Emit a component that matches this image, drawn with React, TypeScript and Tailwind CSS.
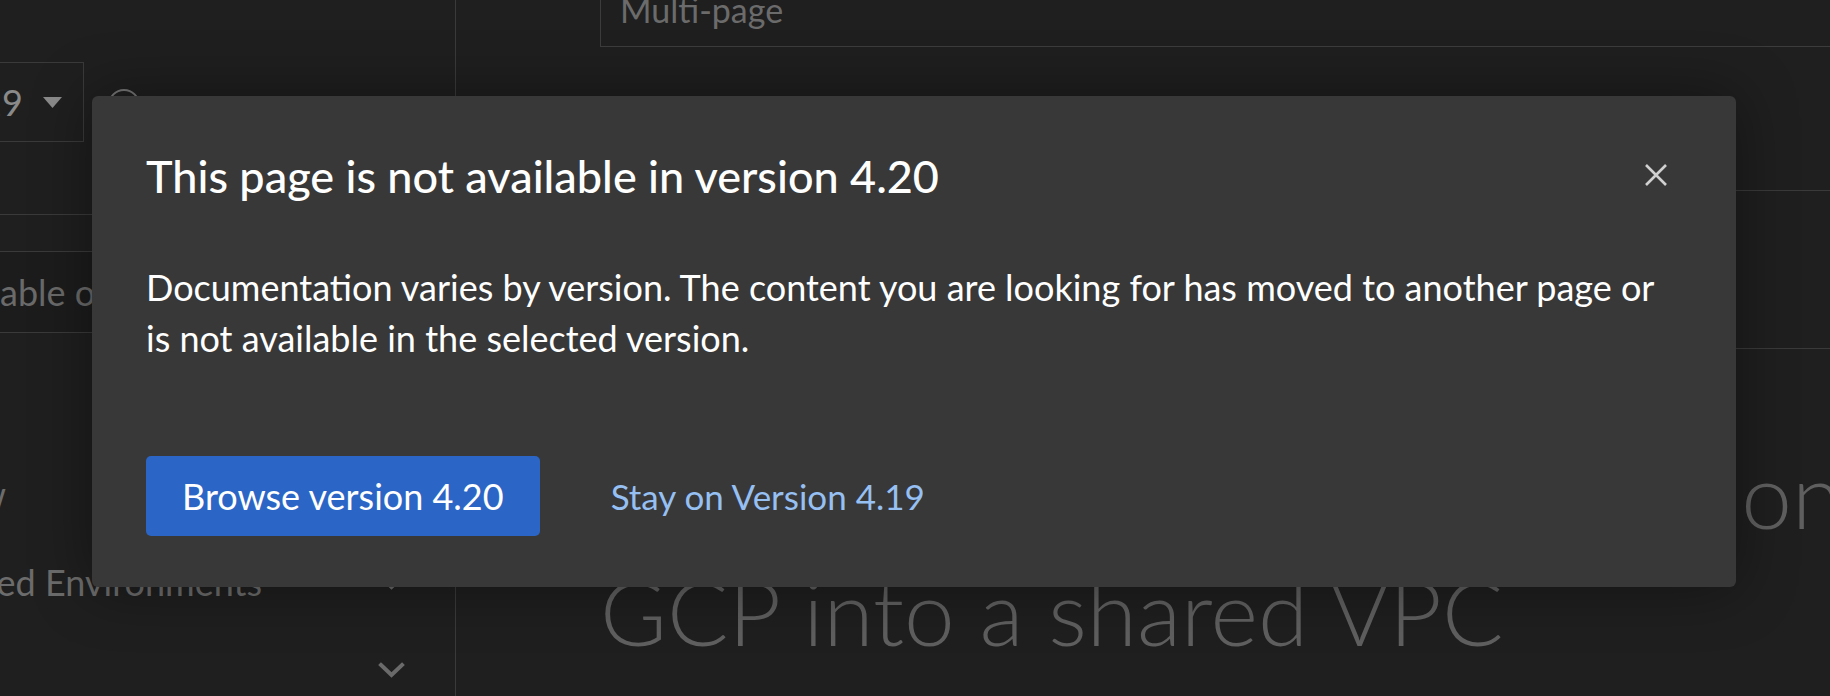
import React from "react";

function Caret() {
  return (
    <svg width="19" height="11" viewBox="0 0 19 11" className="shrink-0">
      <path d="M0 0 L19 0 L9.5 11 Z" fill="#8a8a8a" />
    </svg>
  );
}

function Chevron() {
  return (
    <svg width="27" height="16" viewBox="0 0 27 16" className="shrink-0">
      <path d="M3 3 L13.5 13 L24 3" fill="none" stroke="#6a6a6a" strokeWidth="4" strokeLinecap="square" />
    </svg>
  );
}

function CloseIcon() {
  return (
    <svg width="22" height="22" viewBox="0 0 22 22">
      <path d="M1 1 L21 21 M21 1 L1 21" stroke="#d0d0d0" strokeWidth="2.6" />
    </svg>
  );
}

function SideRow({ text, textWidth, chevron }: { text: string; textWidth: number; chevron: boolean }) {
  return (
    <div className="flex h-[88px] shrink-0 items-center">
      <div className="flex justify-end overflow-hidden" style={{ width: textWidth }}>
        <span className="shrink-0 whitespace-nowrap text-[36px] text-[#6c6c6c]">{text}</span>
      </div>
      {chevron && (
        <div className="ml-auto mr-[50px]">
          <Chevron />
        </div>
      )}
    </div>
  );
}

export default function App() {
  return (
    <div className="relative flex h-[696px] w-[1830px] overflow-hidden bg-[#1f1f1f] font-['Lato',sans-serif]">
      {/* Sidebar */}
      <div className="flex w-[456px] shrink-0 flex-col border-r border-[#3a3a3a]">
        <div className="h-[62px] shrink-0" />
        <div className="flex shrink-0 items-start">
          <div className="flex h-[80px] w-[84px] items-center justify-end gap-[20px] overflow-hidden border-y border-r border-[#3a3a3a] pr-[21px]">
            <span className="shrink-0 text-[36px] text-[#8a8a8a]">4.19</span>
            <Caret />
          </div>
          <div className="ml-[24px] mt-[27px] h-[32px] w-[32px] rounded-full border-2 border-[#777777]" />
        </div>
        <div className="h-[73px] shrink-0 border-b border-[#3a3a3a]" />
        <div className="h-[37px] shrink-0 border-b border-[#3a3a3a]" />
        <div className="flex h-[81px] shrink-0 items-center overflow-hidden border-b border-[#3a3a3a] bg-[#1c1c1c] text-[36px] text-[#6a6a6a]">
          <div className="flex w-0 shrink-0 justify-end">
            <span className="shrink-0 whitespace-nowrap">Search t</span>
          </div>
          <span className="shrink-0 whitespace-nowrap">able of contents</span>
        </div>
        <div className="h-[117px] shrink-0" />
        <SideRow text="Security and compliance overview" textWidth={6} chevron={true} />
        <SideRow text="Disconnected Environments" textWidth={262} chevron={true} />
        <SideRow text="" textWidth={0} chevron={true} />
      </div>

      {/* Main */}
      <div className="flex min-w-0 flex-1 flex-col pl-[144px]">
        <div className="flex h-[47px] shrink-0 items-end border-b border-l border-[#3c3c3c] pb-[19px] pl-[19px]">
          <span className="text-[34px] leading-[34px] text-[#6b6b6b]">Multi-page</span>
        </div>
        <div className="h-[144px] shrink-0 border-b border-[#3a3a3a]" />
        <div className="h-[158px] shrink-0 border-b border-[#3a3a3a]" />
        <div className="shrink-0 pt-[86px] text-[91px] font-light leading-[117px] text-[#5f5f5f]">
          <div className="whitespace-nowrap">Installing a private IPI cluster on</div>
          <div className="whitespace-nowrap">GCP into a shared VPC</div>
        </div>
      </div>

      {/* Modal */}
      <div className="absolute left-[92px] top-[96px] flex h-[491px] w-[1644px] flex-col rounded-[6px] bg-[#383838] px-[54px] pt-[52px] shadow-[0_0_60px_rgba(0,0,0,0.4)]">
        <div className="flex items-start justify-between">
          <h1 className="text-[45px] font-medium leading-[56px] text-white">This page is not available in version 4.20</h1>
          <button className="mr-[15px] mt-[16px] flex h-[22px] w-[22px] items-center justify-center">
            <CloseIcon />
          </button>
        </div>
        <p className="mt-[58px] text-[36px] leading-[51px] text-white">
          Documentation varies by version. The content you are looking for has moved to another page or
          <br />
          is not available in the selected version.
        </p>
        <div className="mt-[92px] flex items-center gap-[71px]">
          <button className="h-[80px] rounded-[5px] bg-[#2b66c6] px-[36px] text-[36px] text-white">Browse version 4.20</button>
          <button className="text-[35px] text-[#96bff2]">Stay on Version 4.19</button>
        </div>
      </div>
    </div>
  );
}
